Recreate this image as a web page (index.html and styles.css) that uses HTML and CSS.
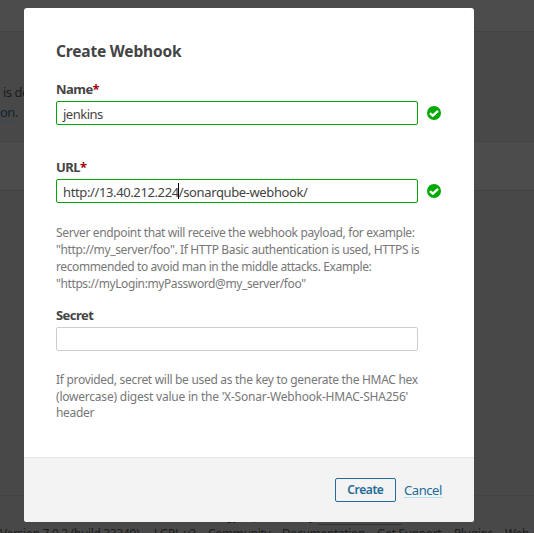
FILE: index.html
```html
<!DOCTYPE html>
<html lang="en">
<head>
<meta charset="utf-8">
<title>Create Webhook</title>
<link rel="stylesheet" href="styles.css">
</head>
<body>
<div class="page">
  <div class="page-nav"></div>
  <div class="page-header">
    <p class="page-text">is de</p>
    <p class="page-link"><span>on</span>.</p>
  </div>
  <div class="page-toolbar"></div>
  <div class="page-content"></div>
  <div class="page-footer">
    <p class="legal">SonarQube technology is powered by <span>SonarSource SA</span></p>
    <ul class="footer-links">
      <li>Version 7.9.3 (build 33349)</li>
      <li>LGPL v3</li>
      <li>Community</li>
      <li>Documentation</li>
      <li>Get Support</li>
      <li>Plugins</li>
      <li>Web API</li>
    </ul>
  </div>
</div>
<form class="modal">
  <div class="modal-body">
    <h2>Create Webhook</h2>
    <div class="field field-name">
      <label>Name<em>*</em></label>
      <div class="row">
        <div class="input valid"><span class="name-value">jenkins</span></div>
        <svg class="check" viewBox="0 0 14 14"><circle cx="7" cy="7" r="7"/><path d="M2.9 7.1 5.9 9.7 11 4.9"/></svg>
      </div>
    </div>
    <div class="field field-url">
      <label>URL<em>*</em></label>
      <div class="row">
        <div class="input valid"><span class="url-host">http://13.40.212.224</span><i class="caret"></i><span class="url-path">/sonarqube-webhook/</span></div>
        <svg class="check" viewBox="0 0 14 14"><circle cx="7" cy="7" r="7"/><path d="M2.9 7.1 5.9 9.7 11 4.9"/></svg>
      </div>
      <p class="note"><span>Server endpoint that will receive the webhook payload, for example:</span><span>"http://my_server/foo". If HTTP Basic authentication is used, HTTPS is</span><span class="tight">recommended to avoid man in the middle attacks. Example:</span><span class="tight">"https://myLogin:myPassword@my_server/foo"</span></p>
    </div>
    <div class="field">
      <label>Secret</label>
      <div class="row"><div class="input"></div></div>
      <p class="note note-secret"><span>If provided, secret will be used as the key to generate the HMAC hex</span><span class="loose">(lowercase) digest value in the 'X-Sonar-Webhook-HMAC-SHA256'</span><span>header</span></p>
    </div>
  </div>
  <div class="modal-foot">
    <button type="button">Create</button>
    <a>Cancel</a>
  </div>
</form>
</body>
</html>
```
FILE: styles.css
```css
* { box-sizing: border-box; }
body {
  margin: 0;
  width: 534px;
  height: 533px;
  overflow: hidden;
  position: relative;
  background: #484848;
  font-family: "Noto Sans", sans-serif;
  font-size: 13px;
  color: #444;
}
h2, p, ul { margin: 0; padding: 0; }
.page { height: 533px; overflow: hidden; color: #1b1b1b; }
.page-nav { height: 32px; background: #4c4c4c; border-bottom: 1px solid #434343; }
.page-header { height: 110px; padding: 50px 0 0; border-bottom: 1px solid #434343; line-height: 20px; letter-spacing: -0.5px; }
.page-text { padding-left: 3px; white-space: nowrap; }
.page-link { color: #10242f; }
.page-link span { border-bottom: 1px solid #364850; }
.page-toolbar { height: 49px; background: #4c4c4c; border-bottom: 1px solid #434343; }
.page-content { height: 304px; }
.page-footer { border-top: 1px solid #434343; padding-top: 13px; font-size: 12px; line-height: 17px; white-space: nowrap; }
.legal { padding-left: 116px; line-height: 14px; letter-spacing: -0.35px; }
.legal span { border-bottom: 1px solid #303030; }
.footer-links { display: grid; grid-template-columns: 154px 54px 74px 95px 77px 51px 60px; list-style: none; padding-top: 2px; font-size: 11.8px; letter-spacing: -0.25px; }

.modal {
  position: absolute;
  left: 24px;
  top: 8px;
  width: 450px;
  height: 514px;
  display: flex;
  flex-direction: column;
  background: #fff;
  border-radius: 3px;
  overflow: hidden;
}
.modal-body { flex: 1; padding: 32px 32px 0; }
h2 { font-size: 15.5px; line-height: 23px; font-weight: 700; letter-spacing: -0.18px; }
.field { display: flex; flex-direction: column; }
.field-name { height: 78px; margin-top: 18px; }
.field-url { height: 148px; }
label { height: 20px; line-height: 16px; font-weight: 700; letter-spacing: -0.55px; }
label em { color: #a4030f; font-style: normal; }
.row { display: flex; align-items: center; gap: 9px; }
.input {
  width: 362px;
  height: 24px;
  display: flex;
  align-items: center;
  padding: 2px 6px 0;
  border: 1px solid #cdcdcd;
  border-radius: 2px;
  line-height: 20px;
  white-space: nowrap;
}
.valid { border-color: #0a0; }
.name-value { letter-spacing: -0.5px; }
.url-host { letter-spacing: -0.38px; }
.url-path { letter-spacing: -0.38px; }
.caret { width: 1px; height: 16px; margin: -2px 0 0 -1px; background: #000; }
.check { width: 14px; height: 14px; fill: #0a0; }
.check path { fill: none; stroke: #fff; stroke-width: 2.4; }
.note { margin-top: 21px; font-size: 12px; line-height: 17px; letter-spacing: -0.36px; color: #777; }
.note span { display: block; white-space: nowrap; }
.note-secret { letter-spacing: -0.3px; line-height: 16.6px; }
.note .tight { letter-spacing: -0.4px; }
.note .loose { letter-spacing: -0.22px; }
.modal-foot {
  height: 65px;
  display: flex;
  justify-content: flex-end;
  align-items: center;
  gap: 8px;
  padding-right: 32px;
  background: #f3f3f3;
  border-top: 1px solid #e6e6e6;
}
button {
  width: 61px;
  height: 24px;
  padding: 0;
  border: 1px solid #236a97;
  border-radius: 2px;
  background: transparent;
  font: 600 12px/22px "Noto Sans", sans-serif;
  letter-spacing: -0.4px;
  color: #236a97;
}
.modal-foot a { border-bottom: 1px solid #b4ddf0; line-height: 14px; letter-spacing: -0.4px; color: #236a97; }
```
